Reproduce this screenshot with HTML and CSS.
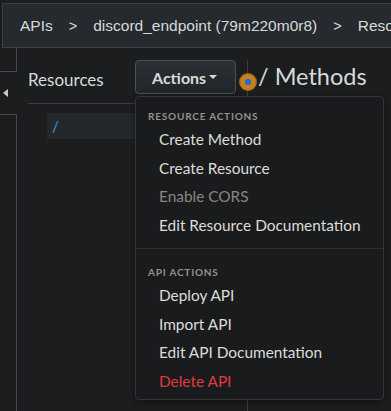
FILE: index.html
```html
<!DOCTYPE html>
<html lang="en">
<head>
    <meta charset="UTF-8">
    <meta name="viewport" content="width=device-width, initial-scale=1.0">
    <title>API Gateway - Resources</title>
    <link rel="stylesheet" href="styles.css">
</head>
<body>
    <!-- breadcrumb bar -->
    <nav class="topbar">
        <span class="crumb">APIs</span>
        <span class="crumb-sep">&gt;</span>
        <span class="crumb">discord_endpoint (79m220m0r8)</span>
        <span class="crumb-sep">&gt;</span>
        <span class="crumb">Resources</span>
    </nav>

    <div class="workspace">
        <!-- collapsed side navigation -->
        <aside class="rail">
            <div class="rail-top"></div>
            <div class="rail-toggle"><span class="rail-arrow"></span></div>
            <div class="rail-bottom"></div>
        </aside>

        <!-- resource tree -->
        <section class="resources">
            <div class="resources-head">
                <h2 class="panel-title">Resources</h2>
                <div class="actions">
                    <button class="actions-btn">Actions<span class="caret"></span></button>

                    <!-- open dropdown menu -->
                    <div class="actions-menu">
                        <div class="menu-group">
                            <div class="menu-label">Resource Actions</div>
                            <a href="#" class="menu-item">Create Method</a>
                            <a href="#" class="menu-item">Create Resource</a>
                            <span class="menu-item disabled">Enable CORS</span>
                            <a href="#" class="menu-item">Edit Resource Documentation</a>
                        </div>
                        <div class="menu-group">
                            <div class="menu-label">API Actions</div>
                            <a href="#" class="menu-item">Deploy API</a>
                            <a href="#" class="menu-item">Import API</a>
                            <a href="#" class="menu-item">Edit API Documentation</a>
                            <a href="#" class="menu-item danger">Delete API</a>
                        </div>
                    </div>
                </div>
            </div>
            <ul class="tree">
                <li class="tree-item selected">/</li>
            </ul>
        </section>

        <!-- methods panel -->
        <section class="methods">
            <span class="methods-handle"></span>
            <h2 class="methods-title">/ Methods</h2>
        </section>
    </div>
</body>
</html>
```

FILE: styles.css
```css
* {
    margin: 0;
    padding: 0;
    box-sizing: border-box;
}

body {
    font-family: 'Lato', 'Open Sans', sans-serif;
    background: #1c1d1f;
    color: #d5dbdb;
    height: 100vh;
    overflow: hidden;
}

/* breadcrumb bar */
.topbar {
    display: flex;
    align-items: center;
    height: 45px;
    margin: 3px -40px 0 2px;
    padding-left: 17px;
    background: #262a2e;
    border: 1px solid #3c4045;
    font-family: 'Liberation Sans', Arial, sans-serif;
    font-size: 15.5px;
    white-space: nowrap;
    overflow: hidden;
}

.crumb-sep {
    margin: 0 16px;
    font-size: 14.5px;
}

.workspace {
    display: flex;
    height: calc(100vh - 48px);
}

/* collapsed side rail */
.rail {
    width: 17px;
    display: flex;
    flex-direction: column;
    flex-shrink: 0;
}

.rail-top {
    height: 24px;
    border-right: 1px solid #464a4f;
    border-bottom: 1px solid #464a4f;
}

.rail-toggle {
    height: 42px;
    display: flex;
    align-items: center;
    padding-left: 3px;
}

.rail-arrow {
    width: 0;
    height: 0;
    border-top: 4px solid transparent;
    border-bottom: 4px solid transparent;
    border-right: 5px solid #c9c9c4;
}

.rail-bottom {
    flex: 1;
    border-top: 1px solid #464a4f;
    border-right: 1px solid #464a4f;
}

/* resources panel */
.resources {
    width: 230px;
    flex-shrink: 0;
    padding: 12px 11px 0;
}

.resources-head {
    display: flex;
    justify-content: space-between;
    align-items: flex-start;
    height: 44px;
    border-bottom: 1px solid #3a3d42;
}

.panel-title {
    margin-top: 10px;
    font-size: 17px;
    font-weight: normal;
    line-height: 20px;
}

.actions {
    position: relative;
}

.actions-btn {
    display: flex;
    align-items: center;
    width: 101px;
    height: 34px;
    padding: 0 14px 0 16px;
    border: 1px solid #4b5056;
    border-radius: 4px;
    background: linear-gradient(#2c2f33, #212428);
    color: #d5dbdb;
    font-family: 'Lato', sans-serif;
    font-size: 16px;
    font-weight: bold;
}

.caret {
    margin-left: 3px;
    width: 0;
    height: 0;
    border-left: 4.5px solid transparent;
    border-right: 4.5px solid transparent;
    border-top: 4px solid #d5dbdb;
}

/* dropdown */
.actions-menu {
    position: absolute;
    top: 36px;
    left: 0;
    width: 249px;
    padding-bottom: 4px;
    background: #1a1b1d;
    border: 1px solid #323539;
    border-radius: 4px;
    box-shadow: 0 2px 6px rgba(0,0,0,0.4);
    z-index: 10;
}

.menu-group {
    padding: 10px 0 8.6px;
}

.menu-group + .menu-group {
    border-top: 1px solid #2e3134;
    padding-top: 14px;
    padding-bottom: 0;
}

.menu-label {
    padding: 0 12px;
    line-height: 18px;
    font-size: 10px;
    font-weight: bold;
    letter-spacing: 0.8px;
    text-transform: uppercase;
    color: #979189;
}

.menu-item {
    display: block;
    height: 28.6px;
    line-height: 28.6px;
    padding-left: 23px;
    font-size: 15.4px;
    color: #dedcd8;
    text-decoration: none;
}

.menu-item.disabled {
    color: #8a8680;
}

.menu-item.danger {
    color: #e0393e;
}

/* resource tree */
.tree {
    list-style: none;
    margin-top: 9px;
}

.tree-item {
    margin-left: 19px;
    height: 26px;
    line-height: 26px;
    padding-left: 5px;
    font-size: 15px;
}

.tree-item.selected {
    background: #25282b;
    color: #4a90e2;
}

/* methods panel */
.methods {
    position: relative;
    flex: 1;
    margin-top: 12px;
    padding-left: 10px;
    border-left: 1px solid #3b3e42;
}

.methods-handle {
    position: absolute;
    left: -9.5px;
    top: 12.5px;
    width: 18px;
    height: 18px;
    border-radius: 50%;
    background: radial-gradient(circle, #1f6fd0 0 3px, #c97f1e 3.6px 7px, #96601a 9px);
}

.methods-title {
    height: 33px;
    line-height: 33px;
    font-size: 23.5px;
    font-weight: normal;
    white-space: nowrap;
}
```
